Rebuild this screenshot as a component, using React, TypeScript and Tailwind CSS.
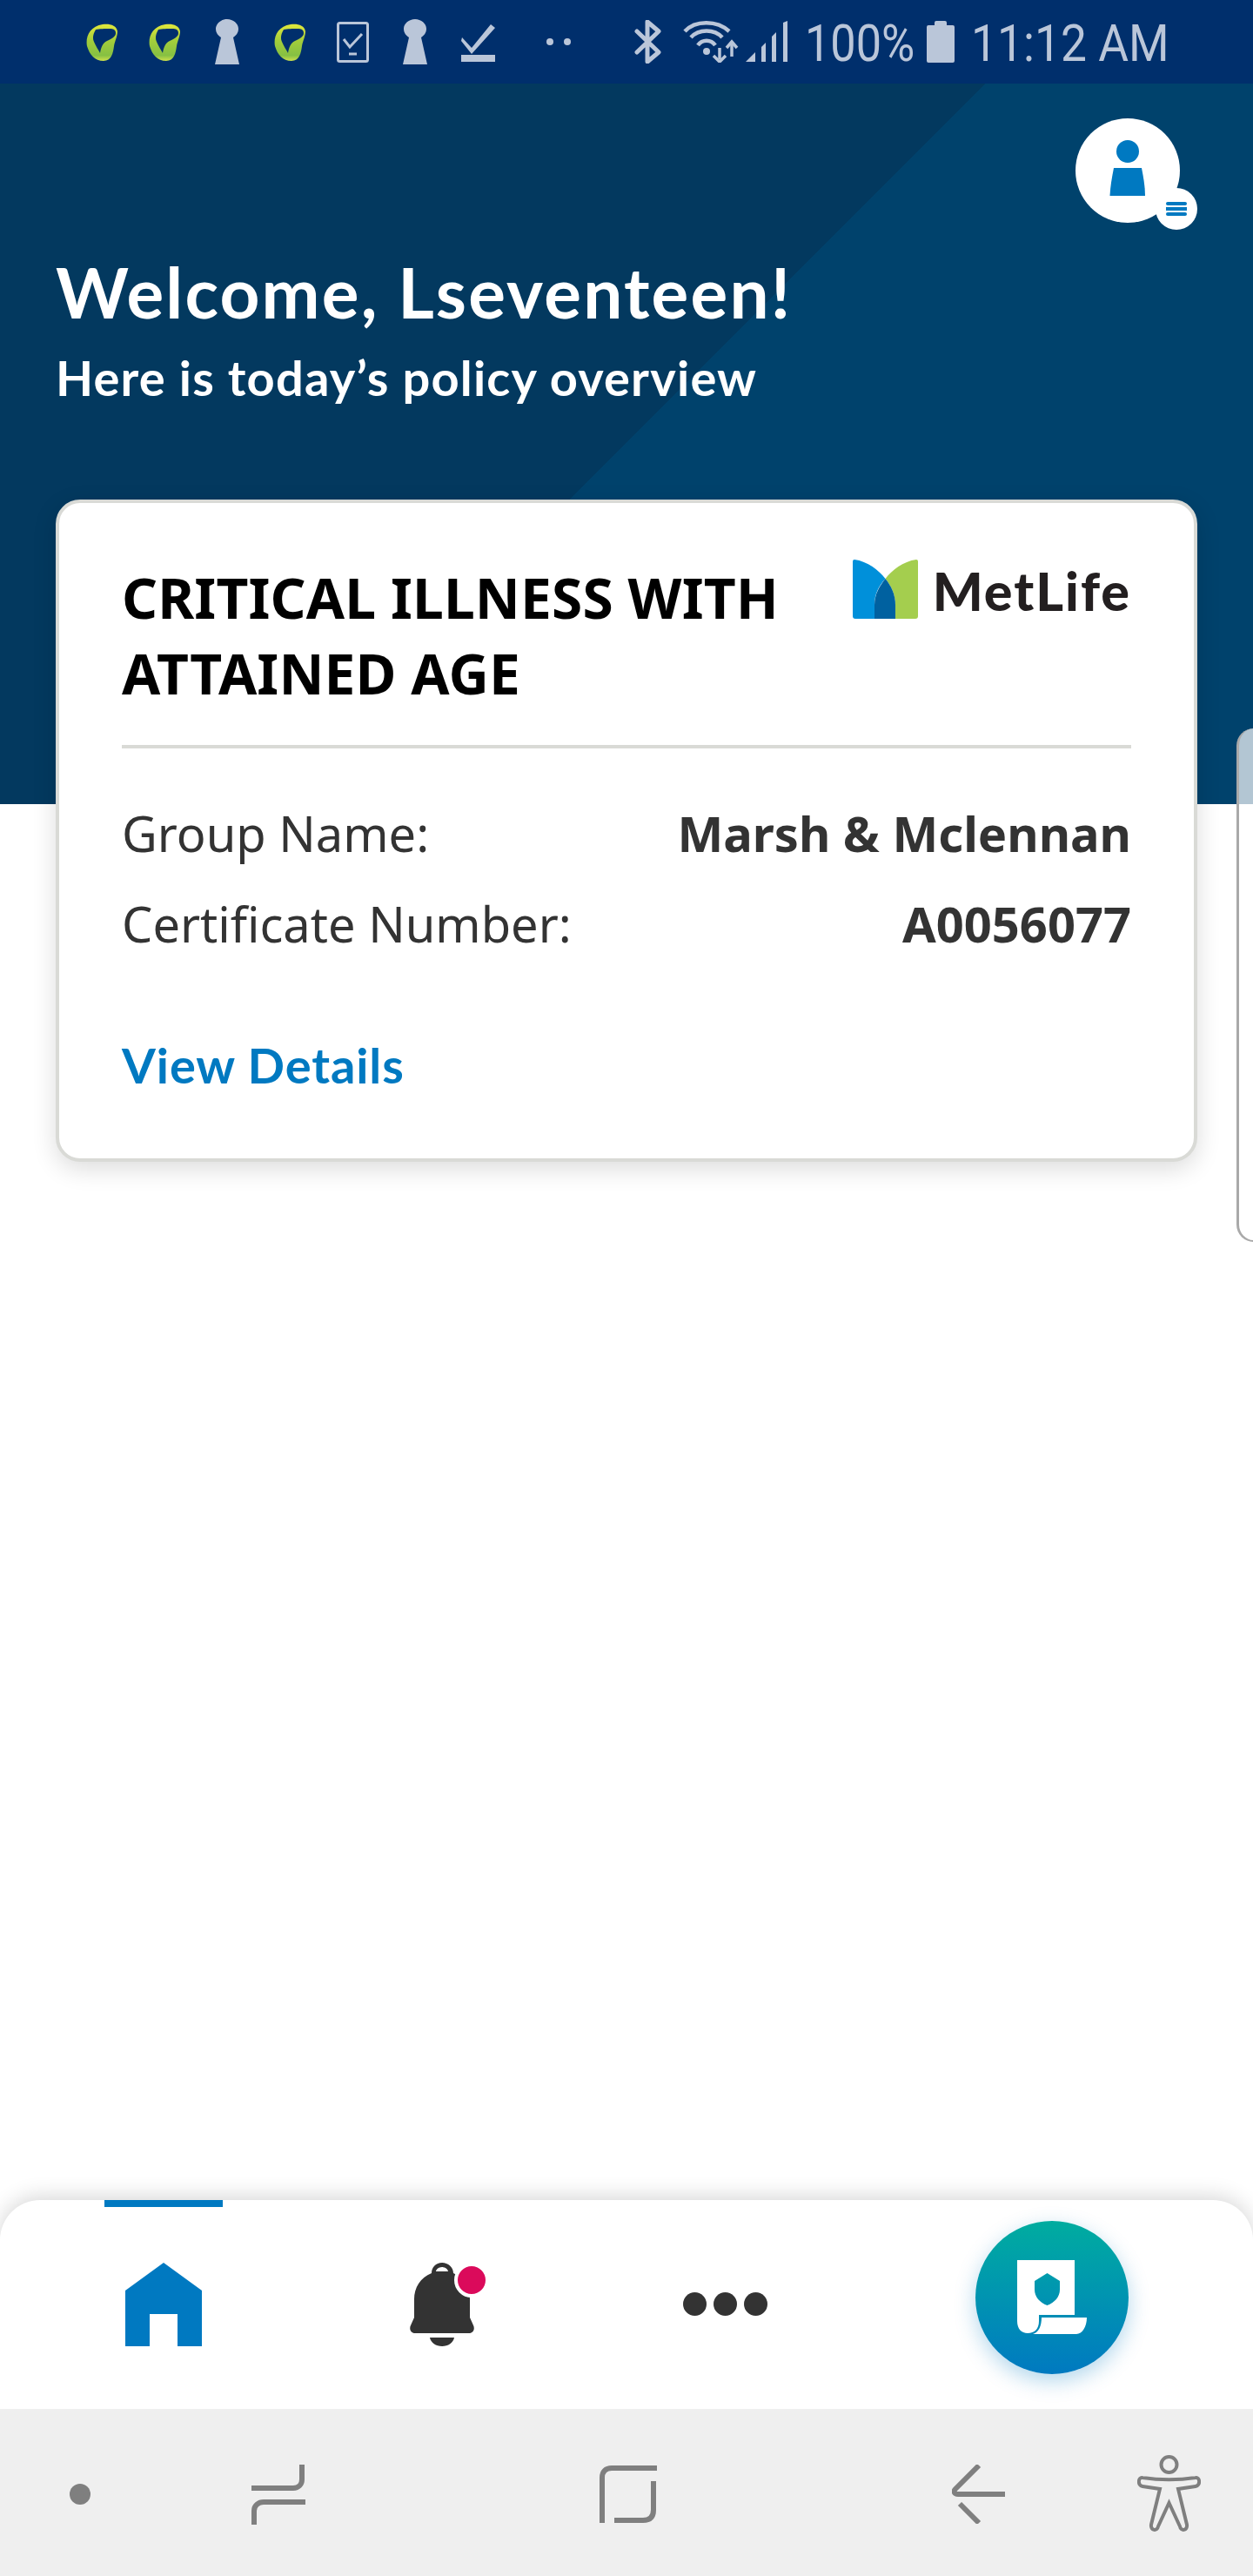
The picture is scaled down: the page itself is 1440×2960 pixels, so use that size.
// App.tsx
const LeafIcon = ({ id, className }: { id: string; className: string }) => (
  <svg viewBox="0 0 36 43" className={className}>
    <defs>
      <linearGradient id={id} x1="0" y1="0" x2="0" y2="1">
        <stop offset="0" stopColor="#e2e83c" />
        <stop offset="0.45" stopColor="#a3cd3b" />
        <stop offset="0.85" stopColor="#86c043" />
        <stop offset="1" stopColor="#cde04c" />
      </linearGradient>
    </defs>
    <path
      fillRule="evenodd"
      fill={`url(#${id})`}
      d="M19 1C27 0 35 2 36 9C36 15 33 20 32 26C31 34 29 43 20 43C10 43 4 36 1 26C-1 16 4 3 19 1ZM11 7C8 12 7 17 9 21C11 26 14 30 16 34C17 28 19 22 24 20C30 17 34 15 34 11C34 7 31 6 27 6C22 6 15 6 11 7Z"
    />
  </svg>
);

const Keyhole = ({ className }: { className: string }) => (
  <svg viewBox="0 0 28 52" className={className} fill="#bac6d9">
    <path d="M14 0C21 0 27 5 27 11C27 16 24 19 21 21L28 52H0L7 21C4 19 1 16 1 11C1 5 7 0 14 0Z" />
  </svg>
);

const PhoneCheck = ({ className }: { className: string }) => (
  <svg viewBox="0 0 37 47" className={className} fill="none" stroke="#bac6d9">
    <rect x="1.5" y="1.5" width="34" height="44" rx="2" strokeWidth="3" />
    <path d="M8 20L15 29L29 14" strokeWidth="3" />
    <path d="M14 37H23" strokeWidth="3" />
  </svg>
);

const CheckBar = ({ className }: { className: string }) => (
  <svg viewBox="0 0 39 46" className={className} fill="#bac6d9">
    <path d="M1 18L12 30L34 3L39 7L12 37L0 22Z" />
    <rect x="0" y="38" width="39" height="8" />
  </svg>
);

const Bluetooth = ({ className }: { className: string }) => (
  <svg viewBox="0 0 31 50" className={className} fill="none" stroke="#bac6d9" strokeWidth="5" strokeLinejoin="round" strokeLinecap="round">
    <path d="M3 13L28 37L15 48V2L28 13L3 37" />
  </svg>
);

const Wifi = ({ className }: { className: string }) => (
  <svg viewBox="0 0 66 48" className={className} fill="none" stroke="#bac6d9">
    <path d="M3 12C15 -1 40 -1 54 12" strokeWidth="4.5" />
    <path d="M10 19C19 9 37 9 46 19" strokeWidth="4.5" />
    <path d="M18 28C23 21 33 21 38 28" strokeWidth="4.5" />
    <circle cx="28" cy="35" r="4" fill="#bac6d9" stroke="none" />
    <path d="M43 31V44" strokeWidth="3.5" />
    <path d="M36 40L43 47L50 40" strokeWidth="3.5" />
    <path d="M57 26V41" strokeWidth="3.5" />
    <path d="M51 31L57 24L63 31" strokeWidth="3.5" />
  </svg>
);

const Signal = ({ className }: { className: string }) => (
  <svg viewBox="0 0 48 48" className={className} fill="#bac6d9">
    <path d="M0 47L11 36V47Z" />
    <path d="M18 30L23 25V47H18Z" />
    <path d="M30 18L35 13V47H30Z" />
    <path d="M43 2L48 0V47H43Z" />
  </svg>
);

const Battery = ({ className }: { className: string }) => (
  <svg viewBox="0 0 32 48" className={className} fill="#bac6d9">
    <path d="M9 2Q9 0 11 0H21Q23 0 23 2V5H30Q32 5 32 7V46Q32 48 30 48H2Q0 48 0 46V7Q0 5 2 5H9Z" />
  </svg>
);

const StatusBar = () => (
  <div className="flex h-[96px] shrink-0 items-center bg-[#002f6c] pl-[99px]">
    <LeafIcon id="leaf-a" className="h-[43px] w-[36px]" />
    <LeafIcon id="leaf-b" className="ml-[36px] h-[43px] w-[36px]" />
    <Keyhole className="ml-[40px] h-[52px] w-[28px]" />
    <LeafIcon id="leaf-c" className="ml-[40px] h-[43px] w-[36px]" />
    <PhoneCheck className="ml-[36px] h-[47px] w-[37px]" />
    <Keyhole className="ml-[39px] h-[52px] w-[28px]" />
    <CheckBar className="ml-[39px] h-[46px] w-[39px]" />
    <span className="ml-[59px] size-2 rounded-full bg-[#bac6d9]" />
    <span className="ml-3 size-2 rounded-full bg-[#bac6d9]" />
    <Bluetooth className="ml-[73px] h-[50px] w-[31px]" />
    <Wifi className="ml-[24px] h-[48px] w-[66px]" />
    <Signal className="ml-[7px] h-[48px] w-[48px]" />
    <div className="mt-[3px] ml-[20px] w-[124px] origin-left scale-x-[0.87] whitespace-nowrap font-['Roboto',sans-serif] text-[60px] leading-none font-normal text-[#bac6d9]">
      100%
    </div>
    <Battery className="ml-[16px] h-[48px] w-[32px]" />
    <div className="mt-[3px] ml-[19px] w-[222px] origin-left scale-x-[0.89] whitespace-nowrap font-['Roboto',sans-serif] text-[60px] leading-none font-normal text-[#bac6d9]">
      11:12 AM
    </div>
  </div>
);

const Avatar = () => (
  <div className="relative size-[120px] rounded-full bg-white">
    <svg viewBox="0 0 120 120" className="size-full" fill="#0079c1">
      <ellipse cx="60" cy="38" rx="13" ry="13" />
      <path d="M44 57H76C78 67 80 78 80 89H39.5C40 78 42 67 44 57Z" />
    </svg>
    <div className="absolute top-[80px] left-[92px] flex size-[48px] flex-col items-center justify-center gap-[2px] rounded-full bg-white">
      <span className="h-1 w-[24px] rounded-full bg-[#0079c1]" />
      <span className="h-1 w-[24px] bg-[#0079c1]" />
      <span className="h-1 w-[24px] rounded-full bg-[#0079c1]" />
    </div>
  </div>
);

const MetLifeLogo = () => (
  <div className="flex w-[320px] items-center justify-between">
    <svg viewBox="0 0 75 68" className="h-[68px] w-[75px]">
      <path fill="#0090da" d="M2 0C17 2 30 12 37.5 22C30 30 25 40 25 52V68H3Q0 68 0 65V2Q0 0 2 0Z" />
      <path fill="#a4ce4e" d="M73 0C58 2 45 12 37.5 22C44 30 49 40 49 52V68H72Q75 68 75 65V2Q75 0 73 0Z" />
      <path fill="#0061a0" d="M37.5 22C31 30 25 40 25 52V68H49V52C49 40 44 30 37.5 22Z" />
    </svg>
    <span className="mt-[2px] font-['Lato',sans-serif] text-[61px] leading-none font-black tracking-[2px] text-[#231f20]">
      MetLife
    </span>
  </div>
);

const PolicyCard = () => (
  <div className="h-[761px] w-[1312px] shrink-0 rounded-[28px] border-4 border-[#d9dad6] bg-white px-[72px] shadow-[0_8px_28px_rgba(0,0,0,0.14)]">
    <div className="flex h-[282px] items-start justify-between border-b-4 border-[#d9dad6]">
      <h2 className="mt-[65px] w-[800px] font-['Noto_Sans',sans-serif] text-[64px] leading-[87px] font-bold tracking-[0.15px] text-black">
        CRITICAL ILLNESS WITH ATTAINED AGE
      </h2>
      <div className="mt-[65px]">
        <MetLifeLogo />
      </div>
    </div>
    <div className="mt-[45px] flex h-[104px] items-center justify-between font-['Noto_Sans',sans-serif] text-[56px] leading-none text-[#333333]">
      <span>Group Name:</span>
      <span className="font-bold">Marsh &amp; Mclennan</span>
    </div>
    <div className="flex h-[104px] items-center justify-between font-['Noto_Sans',sans-serif] text-[56px] leading-none text-[#333333]">
      <span>Certificate Number:</span>
      <span className="font-bold">A0056077</span>
    </div>
    <div className="mt-[83px] font-['Lato',sans-serif] text-[56px] leading-none font-bold tracking-[0.9px] text-[#0079c1]">
      View Details
    </div>
  </div>
);

const Main = () => (
  <main className="flex-1 bg-white">
    <section className="flex h-[828px] flex-col bg-[linear-gradient(135deg,#03395f_801px,#00426c_801px)] px-[64px]">
      <div className="mt-[40px] flex justify-end pr-[20px]">
        <Avatar />
      </div>
      <h1 className="mt-[34px] font-['Lato',sans-serif] text-[80px] leading-[90px] font-bold tracking-[2.2px] text-white">
        Welcome, Lseventeen!
      </h1>
      <p className="mt-[22px] font-['Lato',sans-serif] text-[56px] leading-[64px] font-bold tracking-[1.2px] text-white">
        Here is today’s policy overview
      </p>
    </section>
    <div className="-mt-[350px] flex items-start gap-[45px] pl-[64px]">
      <PolicyCard />
      <div className="mt-[263px] h-[590px] w-[300px] shrink-0 rounded-l-[20px] border-b-2 border-l-[3px] border-[#a9a9a9] bg-white/70" />
    </div>
  </main>
);

const BottomNav = () => (
  <nav className="relative flex h-[240px] shrink-0 items-start rounded-t-[46px] bg-white shadow-[0_-4px_24px_rgba(0,0,0,0.16)]">
    <div className="ml-[120px] flex w-[136px] flex-col items-center">
      <span className="h-2 w-full bg-[#0079c1]" />
      <svg viewBox="0 0 88 96" className="mt-[64px] h-[96px] w-[88px]" fill="#0079c1">
        <path d="M44 0L88 32V96H60V59H28V96H0V32Z" />
      </svg>
    </div>
    <div className="relative ml-[215px] mt-[72px] h-[96px] w-[74px]">
      <svg viewBox="0 0 74 96" className="size-full" fill="#333333">
        <path fillRule="evenodd" d="M37 0C44 0 50 5 50 12C62 17 69 29 69 42V63L73 72C75 76 73 81 68 81H6C1 81 -1 76 1 72L5 63V42C5 29 12 17 25 12C25 5 30 0 37 0ZM37 5C33 5 30 8 30 10H44C44 8 41 5 37 5Z" />
        <path d="M23 86H51C50 92 44 96 37 96C30 96 24 92 23 86Z" />
      </svg>
      <span className="absolute top-0 left-[51px] size-[40px] rounded-full border-4 border-white bg-[#db0a5b]" />
    </div>
    <div className="ml-[240px] mt-[106px] flex gap-2">
      <span className="size-[27px] rounded-full bg-[#333333]" />
      <span className="size-[27px] rounded-full bg-[#333333]" />
      <span className="size-[27px] rounded-full bg-[#333333]" />
    </div>
    <div className="ml-[239px] mt-[24px] flex size-[176px] items-center justify-center rounded-full bg-linear-to-b from-[#00ac9f] to-[#0079c0] shadow-[0_8px_24px_rgba(0,121,193,0.3)]">
      <svg viewBox="0 0 80 86" className="h-[86px] w-[80px]" fill="white">
        <path fillRule="evenodd" d="M0 0H66V63H25V70C25 79 20 84 12 84C5 84 0 79 0 70ZM34.5 15L20 24V34C20 42 26 49 34.5 52C43 49 49 42 49 34V24Z" />
        <path d="M28 66H80C80 76 75 85 68 85H18C25 83 28 75 28 66Z" />
      </svg>
    </div>
  </nav>
);

const SystemNav = () => (
  <div className="relative flex h-[192px] shrink-0 items-start bg-[#efefef] pl-[80px]">
    <span className="mt-[86px] size-6 rounded-full bg-[#7f7f7f]" />
    <svg viewBox="0 0 62 72" className="ml-[185px] mt-[62px] h-[72px] w-[62px]" fill="none" stroke="#7f7f7f" strokeWidth="6">
      <path d="M0 29H48C54 29 58 25 58 19V2" />
      <path d="M62 45H14C8 45 3 49 3 55V71" />
    </svg>
    <svg viewBox="0 0 66 66" className="ml-[338px] mt-[65px] h-[66px] w-[66px]" fill="none" stroke="#7f7f7f" strokeWidth="6">
      <path d="M3 66V14C3 7 7 3 14 3H66" />
      <path d="M17 63H50C58 63 62 59 62 51V18" />
    </svg>
    <svg viewBox="0 0 62 68" className="ml-[339px] mt-[64px] h-[68px] w-[62px]" fill="none" stroke="#7f7f7f" strokeWidth="6">
      <path d="M31 1L4 28C1 31 3 34 7 34H61" />
      <path d="M9 45L31 67" />
    </svg>
    <svg viewBox="0 0 73 88" className="ml-[151px] mt-[53px] h-[88px] w-[73px]" fill="none" stroke="#7f7f7f" strokeWidth="4">
      <circle cx="36.5" cy="11" r="9" />
      <path d="M6 26C26 29 47 29 67 26C72 25 73 35 67 36L47 39L57 80C58 87 50 88 49 82L36.5 55L24 82C23 88 15 87 16 80L26 39L6 36C0 35 1 25 6 26Z" />
    </svg>
  </div>
);

export default function App() {
  return (
    <div className="flex h-[2960px] w-[1440px] flex-col overflow-hidden bg-white">
      <StatusBar />
      <Main />
      <BottomNav />
      <SystemNav />
    </div>
  );
}
